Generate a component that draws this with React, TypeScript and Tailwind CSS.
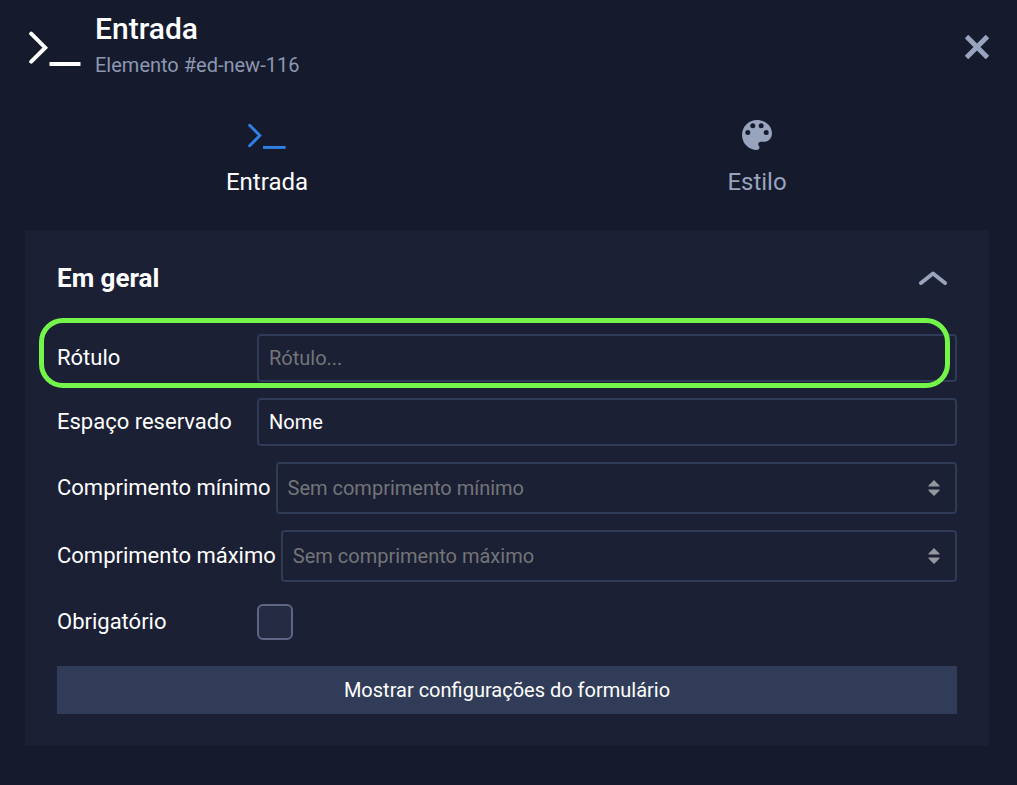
import { useState } from "react";
import type { ReactNode } from "react";
import { clsx } from "clsx";

type Tab = "input" | "style";

function PromptIcon({ className }: { className?: string }) {
  return (
    <svg viewBox="0 0 52 40" fill="none" stroke="currentColor" strokeWidth="4" strokeLinecap="round" className={className} aria-hidden="true">
      <path d="M2.2 6.700 16.200 20.700 2.200 34.700" />
      <path d="M20.500 37H51.500" strokeLinecap="butt" />
    </svg>
  );
}

function PaletteIcon({ className }: { className?: string }) {
  return (
    <svg viewBox="0 0 30 30" fill="currentColor" className={className} aria-hidden="true">
      <path
        fillRule="evenodd"
        d="M15 0C6.7 0 0 6.7 0 15s6.7 15 15 15c1.4 0 2.5-1.1 2.5-2.5 0-.6-.25-1.25-.65-1.7-.4-.4-.6-1-.6-1.6 0-1.4 1.1-2.5 2.5-2.5h2.95C26.3 21.7 30 18 30 13.4 30 6 23.3 0 15 0ZM5.8 15a2.5 2.5 0 1 1 0-5 2.5 2.5 0 0 1 0 5Zm5-6.700a2.5 2.5 0 1 1 0-5 2.5 2.5 0 0 1 0 5Zm8.400 0a2.5 2.5 0 1 1 0-5 2.5 2.5 0 0 1 0 5Zm5 6.700a2.5 2.5 0 1 1 0-5 2.5 2.5 0 0 1 0 5Z"
      />
    </svg>
  );
}

function TabButton({ active, label, icon, onClick }: { active: boolean; label: string; icon: ReactNode; onClick: () => void }) {
  return (
    <button type="button" role="tab" aria-selected={active} onClick={onClick} className="flex flex-1 flex-col items-center gap-[15px]">
      <span className={clsx("flex h-8 items-center", active ? "text-[#2f80e4]" : "text-[#98a3bd]")}>{icon}</span>
      <span className={clsx("text-2xl", active ? "text-white" : "text-[#98a3bd]")}>{label}</span>
    </button>
  );
}

function Row({ id, label, children }: { id: string; label: string; children: ReactNode }) {
  return (
    <div className="relative flex items-center">
      <label htmlFor={id} className="min-w-[200px] shrink-0 pr-[5px] text-[22px] leading-8">{label}</label>
      {children}
    </div>
  );
}

const field = "w-full min-w-0 rounded border-2 border-[#303b57] bg-transparent px-2.5 text-xl text-white outline-none placeholder:text-[#747577]";

function NumberField({ id, placeholder }: { id: string; placeholder: string }) {
  return (
    <div className="relative flex-1">
      <input id={id} type="number" placeholder={placeholder} className={clsx(field, "block h-13 [appearance:textfield]")} />
      <svg viewBox="0 0 12 16" fill="#9596a0" className="pointer-events-none absolute top-[18px] right-[17px] h-4 w-3" aria-hidden="true">
        <path d="M6 0 11.500 5.500V6.500H.5V5.500ZM6 16 .5 10.500V9.500h11v1Z" />
      </svg>
    </div>
  );
}

export default function App() {
  const [tab, setTab] = useState<Tab>("input");
  const [open, setOpen] = useState(true);
  const [label, setLabel] = useState("");
  const [placeholder, setPlaceholder] = useState("Nome");

  return (
    <div className="min-h-screen bg-[#151a2d] pb-10 font-[Roboto,sans-serif] text-white">
      <header className="flex items-center pt-[11px] pr-7 pl-[29px]">
        <PromptIcon className="h-10 w-[52px] shrink-0" />
        <div className="ml-3.5 flex-1">
          <h1 className="text-3xl leading-9 font-medium">Entrada</h1>
          <p className="text-xl leading-9 text-[#8d97b1]">Elemento #ed-new-116</p>
        </div>
        <button type="button" aria-label="Fechar" className="text-[#98a3bd]">
          <svg viewBox="0 0 24 24" stroke="currentColor" strokeWidth="5" className="h-6 w-6" aria-hidden="true">
            <path d="M1.500 1.500 22.500 22.500M22.500 1.500 1.500 22.500" />
          </svg>
        </button>
      </header>

      <div role="tablist" className="mt-9 flex pr-[15px] pl-[22px]">
        <TabButton active={tab === "input"} label="Entrada" icon={<PromptIcon className="h-[30px] w-[38px]" />} onClick={() => setTab("input")} />
        <TabButton active={tab === "style"} label="Estilo" icon={<PaletteIcon className="h-[30px] w-[30px]" />} onClick={() => setTab("style")} />
      </div>

      <section className="mt-8 mr-7 ml-[25px] bg-[#1b2035] p-8">
        <button type="button" aria-expanded={open} onClick={() => setOpen(!open)} className="flex w-full items-center justify-between pr-2.5">
          <span className="text-[26px] leading-8 font-bold">Em geral</span>
          <svg viewBox="0 0 28 14" fill="none" stroke="#98a3bd" strokeWidth="4" strokeLinecap="round" strokeLinejoin="round" className={clsx("h-3.5 w-7", !open && "rotate-180")} aria-hidden="true">
            <path d="M2 12 14 2.500 26 12" />
          </svg>
        </button>

        {open && (
          <form className="mt-10 flex flex-col gap-4" onSubmit={(e) => e.preventDefault()}>
            <Row id="label" label="Rótulo">
              <input id="label" type="text" placeholder="Rótulo..." value={label} onChange={(e) => setLabel(e.target.value)} className={clsx(field, "h-12")} />
              <div className="pointer-events-none absolute -top-4 right-[7px] -bottom-1.5 -left-[18px] rounded-3xl border-5 border-[#74f54a]" />
            </Row>
            <Row id="placeholder" label="Espaço reservado">
              <input id="placeholder" type="text" value={placeholder} onChange={(e) => setPlaceholder(e.target.value)} className={clsx(field, "h-12")} />
            </Row>
            <Row id="min" label="Comprimento mínimo">
              <NumberField id="min" placeholder="Sem comprimento mínimo" />
            </Row>
            <Row id="max" label="Comprimento máximo">
              <NumberField id="max" placeholder="Sem comprimento máximo" />
            </Row>
            <div className="pb-1">
              <Row id="required" label="Obrigatório">
                <div className="flex h-12 items-center">
                  <input id="required" type="checkbox" className="h-9 w-9 appearance-none rounded-md border-2 border-[#5d6685] bg-[#252b43] checked:bg-[#2f80e4]" />
                </div>
              </Row>
            </div>
            <button type="submit" className="h-12 w-full bg-[#313c58] text-xl">Mostrar configurações do formulário</button>
          </form>
        )}
      </section>
    </div>
  );
}
